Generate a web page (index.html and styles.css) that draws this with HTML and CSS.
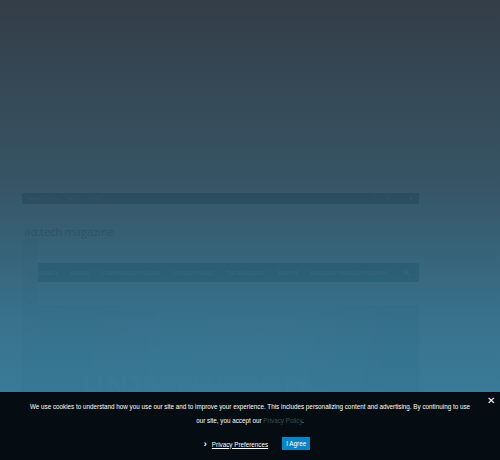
FILE: index.html
```html
<!DOCTYPE html>
<html lang="en">
<head>
    <meta charset="UTF-8">
    <meta name="viewport" content="width=device-width, initial-scale=1.0">
    <title>ad:tech magazine</title>
    <link rel="stylesheet" href="styles.css">
</head>
<body>
    <div class="site">
        <div class="top-bar">
            <div class="top-links">
                <span>Advertise with us</span>
                <span>About</span>
                <span>Contact</span>
            </div>
            <div class="top-social">
                <span>f</span>
                <span>◎</span>
                <span>t</span>
                <span>▶</span>
            </div>
        </div>

        <header class="header">
            <div class="logo"><span class="logo-mark">ad:tech</span>magazine</div>
        </header>

        <nav class="main-nav">
            <a href="#home">HOME ▾</a>
            <a href="#videos">VIDEOS</a>
            <a href="#spotlight">CAMPAIGN SPOTLIGHT</a>
            <a href="#talks">AD:TECH TALKS</a>
            <a href="#magazine">THE MAGAZINE</a>
            <a href="#events">EVENTS</a>
            <a href="#discover">DISCOVER WORLD PROGRAM</a>
            <svg class="search-icon" width="7" height="7" viewBox="0 0 10 10">
                <circle cx="4" cy="4" r="3" fill="none" stroke="#fff" stroke-width="1.4"/>
                <line x1="6.2" y1="6.2" x2="9.3" y2="9.3" stroke="#fff" stroke-width="1.4"/>
            </svg>
        </nav>

        <div class="crumbs">Home / Features / Untethered</div>

        <div class="hero">
            <div class="hero-tag">FEATURE ▾</div>
            <div class="hero-title">UNTETHERED</div>
        </div>

        <div class="share-bar">
            <span>f</span>
            <span>t</span>
            <span>◉</span>
            <span>in</span>
            <span>p</span>
            <span>✉</span>
            <span>t</span>
            <span>+</span>
        </div>
    </div>

    <div class="overlay"></div>

    <div class="cookie-banner">
        <button class="cookie-close">✕</button>
        <p class="cookie-text">
            We use cookies to understand how you use our site and to improve your experience. This includes personalizing content and advertising. By continuing to use our site, you accept our <a href="#privacy">Privacy Policy</a>.
        </p>
        <div class="cookie-actions">
            <a class="cookie-prefs" href="#prefs"><span class="chev">›</span><u>Privacy Preferences</u></a>
            <button class="cookie-agree">I Agree</button>
        </div>
    </div>
</body>
</html>
```

FILE: styles.css
```css
* {
    margin: 0;
    padding: 0;
    box-sizing: border-box;
}

body {
    background: #f2f2f2;
    font-family: 'Liberation Sans', Arial, sans-serif;
    height: 460px;
    overflow: hidden;
}

/* page behind the consent overlay */
.site {
    position: relative;
    width: 397px;
    margin: 193px 0 0 22px;
    background: #fff;
}

.top-bar {
    height: 11px;
    background: #4a5a66;
    display: flex;
    justify-content: space-between;
    align-items: center;
    padding: 0 6px;
    font-size: 4px;
    color: #ccc;
}

.top-links,
.top-social {
    display: flex;
    gap: 10px;
}

.header {
    height: 59px;
    display: flex;
    align-items: center;
    padding: 0 0 4px 2px;
}

.logo {
    font-family: 'Open Sans', sans-serif;
    font-size: 11.5px;
    letter-spacing: -0.2px;
    color: #1f3a4a;
}

.logo-mark {
    color: #14293a;
    margin-right: 2px;
}

.main-nav {
    height: 19px;
    background: #3a6478;
    display: flex;
    align-items: center;
    gap: 12px;
    padding-left: 16px;
}

.main-nav a {
    flex-shrink: 0;
    white-space: nowrap;
    color: #a8bfcb;
    text-decoration: none;
    font-size: 5.2px;
    font-weight: bold;
}

.search-icon {
    flex-shrink: 0;
    margin-left: 4px;
}

.crumbs {
    height: 23px;
    background: #fff;
    font-size: 4px;
    color: #ddd;
    padding: 9px 0 0 40px;
}

.hero {
    height: 90px;
    background: linear-gradient(100deg, #c4ced4 0%, #d6dee2 30%, #e9eef0 60%, #b0bfc8 100%);
    position: relative;
}

.hero-tag {
    width: 60px;
    height: 12px;
    background: #c6d1d7;
    font-size: 4px;
    color: #eee;
    padding: 2px 0 0 18px;
}

.hero-title {
    position: absolute;
    left: 60px;
    bottom: -8px;
    font-size: 30px;
    font-weight: bold;
    color: #e9f2f6;
    letter-spacing: 2px;
}

.share-bar {
    position: absolute;
    left: 0;
    top: 46px;
    width: 16px;
    display: flex;
    flex-direction: column;
    align-items: center;
    gap: 5px;
    padding: 2px 0;
    background: #d4dde2;
    font-size: 8px;
    font-weight: bold;
    color: #b3c2ca;
}

.overlay {
    position: fixed;
    inset: 0;
    background: linear-gradient(180deg, #27313c 0%, #2a4a5c 40%, #2c6a86 70%, #2f7b9b 100%);
    opacity: 0.94;
}

.cookie-banner {
    position: fixed;
    left: 0;
    right: 0;
    bottom: 0;
    height: 68px;
    background: #050d12;
    color: #fff;
    text-align: center;
    padding: 8px 29px 0;
}

.cookie-text {
    font-size: 6.3px;
    line-height: 14px;
}

.cookie-text a {
    color: #3a4d5a;
    text-decoration: none;
}

.cookie-close {
    position: absolute;
    top: 3px;
    right: 5px;
    background: none;
    border: none;
    color: #fff;
    font-size: 10px;
    cursor: pointer;
}

.cookie-actions {
    display: flex;
    justify-content: center;
    align-items: center;
    gap: 14px;
    margin-top: 9px;
    margin-left: 14px;
}

.cookie-prefs {
    color: #fff;
    font-size: 6.3px;
    text-decoration: none;
}

.chev {
    font-size: 9px;
    font-weight: bold;
    margin-right: 5px;
}

.cookie-agree {
    background: #0a84c4;
    color: #fff;
    border: none;
    font-family: 'Liberation Sans', Arial, sans-serif;
    font-size: 6.3px;
    width: 28px;
    height: 13px;
    cursor: pointer;
}
```
